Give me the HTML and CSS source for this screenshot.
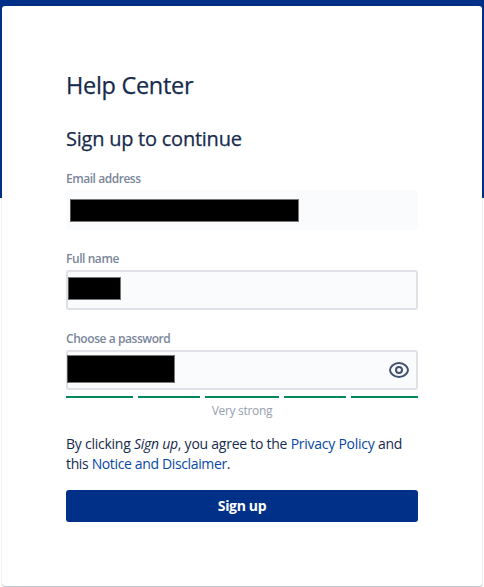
FILE: index.html
```html
<!DOCTYPE html>
<html lang="en">
<head>
<meta charset="utf-8">
<title>Help Center</title>
<link rel="stylesheet" href="styles.css">
</head>
<body>
<main class="card">
  <h1 class="title">Help Center</h1>
  <h2 class="subtitle">Sign up to continue</h2>
  <form class="form">
    <div class="label label-email">Email address</div>
    <div class="field field-disabled"><span class="mask mask-email"></span></div>
    <div class="label label-name">Full name</div>
    <div class="field"><span class="mask mask-name"></span></div>
    <div class="label label-password">Choose a password</div>
    <div class="field">
      <span class="mask mask-password"></span>
      <svg class="eye" width="24" height="24" viewBox="0 0 24 24" fill="none" stroke="#42526e" stroke-width="2">
        <path d="M12 5C6.500 5 3 9.600 3 12s3.500 7 9 7 9-4.600 9-7-3.500-7-9-7z"/>
        <circle cx="12" cy="12" r="3"/>
      </svg>
    </div>
    <div class="meter"><i></i><i></i><i></i><i></i><i></i></div>
    <div class="strength">Very strong</div>
    <p class="terms"><span class="line-one">By clicking <em>Sign up</em>, you agree to the <a>Privacy Policy</a> and</span><br><span class="line-two">this <a>Notice and Disclaimer</a>.</span></p>
    <button class="submit" type="button">Sign up</button>
  </form>
</main>
</body>
</html>
```
FILE: styles.css
```css
* { box-sizing: border-box; }
body {
  margin: 0;
  height: 587px;
  overflow: hidden;
  padding: 6px 2px 0;
  background: linear-gradient(#003087 198px, #fff 198px);
  font-family: "Open Sans", "Noto Sans", sans-serif;
  color: #172b4d;
}
.card {
  height: 580px;
  padding: 63px 64px 0;
  background: #fff;
  border-radius: 3px;
  box-shadow: 0 1px 1px rgba(9, 30, 66, .25), 0 0 1px rgba(9, 30, 66, .31);
}
.title, .subtitle { margin: 0; font-weight: 400; white-space: nowrap; -webkit-text-stroke: .25px currentColor; }
.title { font-size: 23.5px; line-height: 32px; letter-spacing: -.3px; }
.subtitle { margin-top: 24px; font-size: 20px; line-height: 28px; letter-spacing: -.24px; }
.form { margin: 0; }
.label { height: 16px; font-size: 12px; line-height: 16px; font-weight: 600; color: #7a869a; white-space: nowrap; }
.label-email { margin-top: 18px; margin-bottom: 3px; letter-spacing: -.46px; }
.label-name, .label-password { margin-top: 21px; margin-bottom: 3px; letter-spacing: -.43px; }
.field {
  display: flex;
  align-items: flex-start;
  height: 40px;
  background: #fafbfc;
  border: 2px solid #dfe1e6;
  border-radius: 3px;
}
.field-disabled { border-color: #fafbfc; }
.mask { background: #000; border: 1px solid #777; border-left-color: #555; }
.mask-email { width: 229px; height: 23px; margin: 7px 0 0 2px; }
.mask-name { width: 53px; height: 23px; margin-top: 5px; }
.mask-password { width: 108px; height: 28px; margin: 3px 0 0 -1px; }
.eye { margin: 6px 5px 0 auto; }
.meter { display: grid; grid-template-columns: 67px 62px 74px 62px 67px; gap: 5px; height: 2px; margin-top: 6px; }
.meter i { background: #00875a; }
.strength { margin-top: 5px; text-align: center; font-size: 12px; line-height: 16px; letter-spacing: -.3px; color: #97a0af; }
.terms { margin: 15px 0 0; font-size: 14px; line-height: 20px; white-space: nowrap; }
.line-one { letter-spacing: -.25px; }
.line-two { letter-spacing: -.36px; }
.terms a { color: #0747a6; }
.submit {
  display: block;
  width: 100%;
  height: 32px;
  margin-top: 16px;
  padding: 0;
  border: 0;
  border-radius: 3px;
  background: #003087;
  color: #fff;
  font: 700 14px/32px "Open Sans", "Noto Sans", sans-serif;
  letter-spacing: -.35px;
}
```
